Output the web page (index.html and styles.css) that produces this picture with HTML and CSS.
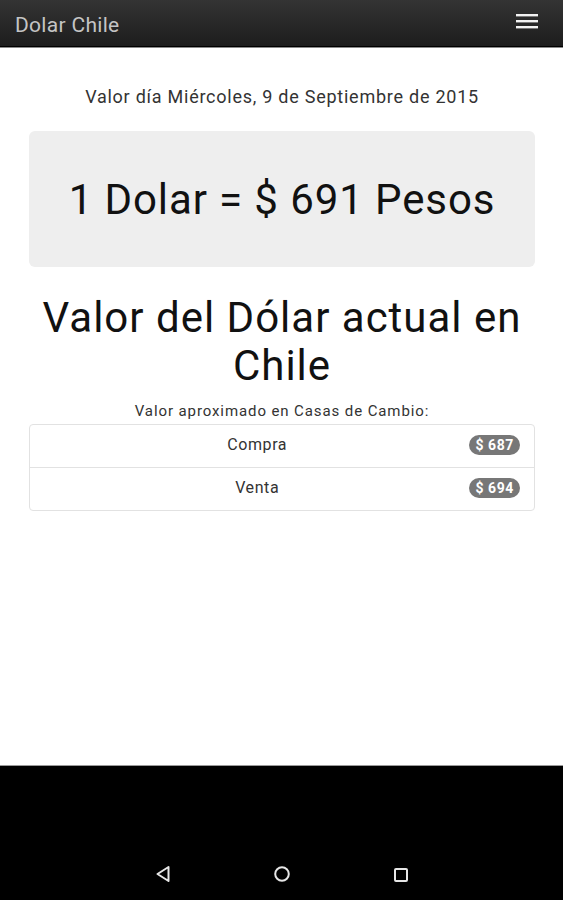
FILE: index.html
```html
<!DOCTYPE html>
<html lang="es">
<head>
<meta charset="utf-8">
<title>Dolar Chile</title>
<link rel="stylesheet" href="styles.css">
</head>
<body>
<div class="screen">
  <header class="topbar">
    <span class="title">Dolar Chile</span>
    <svg class="menu" width="22" height="16" viewBox="0 0 22 16">
      <rect x="0" y="1" width="22" height="2.4" fill="#f2f2f2"/>
      <rect x="0" y="7" width="22" height="2.4" fill="#f2f2f2"/>
      <rect x="0" y="13" width="22" height="2.4" fill="#f2f2f2"/>
    </svg>
  </header>
  <main class="content">
    <p class="date">Valor día Miércoles, 9 de Septiembre de 2015</p>
    <div class="jumbo">1 Dolar = $ 691 Pesos</div>
    <h1 class="heading">Valor del Dólar actual en Chile</h1>
    <p class="sub">Valor aproximado en Casas de Cambio:</p>
    <ul class="list">
      <li class="item"><span class="label">Compra</span><span class="badge">$ 687</span></li>
      <li class="item"><span class="label">Venta</span><span class="badge">$ 694</span></li>
    </ul>
  </main>
  <nav class="navbar">
    <svg width="16" height="18" viewBox="0 0 16 18"><path d="M13.5 2 L2.5 9 L13.5 16 Z" fill="none" stroke="#e6e6e6" stroke-width="2" stroke-linejoin="round"/></svg>
    <svg width="18" height="18" viewBox="0 0 18 18"><circle cx="9" cy="9" r="6.8" fill="none" stroke="#e6e6e6" stroke-width="2"/></svg>
    <svg width="16" height="16" viewBox="0 0 16 16"><rect x="2" y="2" width="12" height="12" rx="1" fill="none" stroke="#e6e6e6" stroke-width="2"/></svg>
  </nav>
</div>
</body>
</html>
```

FILE: styles.css
```css
html, body {
  margin: 0;
  padding: 0;
}
body {
  font-family: Roboto, "Noto Sans", sans-serif;
  background: #fff;
}
.screen {
  width: 563px;
  height: 900px;
  display: flex;
  flex-direction: column;
  overflow: hidden;
}
.topbar {
  height: 46px;
  flex: none;
  background: linear-gradient(#343434, #1d1d1d);
  border-bottom: 1px solid #000;
  box-shadow: 0 1px 0 #8a8a8a;
  display: flex;
  align-items: center;
  justify-content: space-between;
  padding: 0 25px 0 15px;
}
.title {
  color: #c4c4c4;
  font-size: 21px;
  letter-spacing: 0.3px;
  padding-top: 4px;
}
.menu {
  margin-top: -4px;
}
.content {
  flex: 1;
  padding: 0 28px 0 29px;
  display: flex;
  flex-direction: column;
  text-align: center;
}
.date {
  margin: 38px 0 0;
  font-size: 18px;
  letter-spacing: 0.75px;
  color: #333;
  line-height: 24px;
}
.jumbo {
  margin-top: 22px;
  height: 136px;
  background: #eeeeee;
  border-radius: 6px;
  display: flex;
  align-items: center;
  justify-content: center;
  font-size: 42px;
  color: #111;
  letter-spacing: 0.9px;
}
.heading {
  margin: 27px 0 0;
  font-size: 42px;
  font-weight: 400;
  line-height: 48px;
  letter-spacing: 1px;
  color: #111;
}
.sub {
  margin: 11px 0 0;
  font-size: 15px;
  letter-spacing: 0.9px;
  line-height: 20px;
  color: #333;
}
.list {
  list-style: none;
  margin: 3px 0 0;
  padding: 0;
  border: 1px solid #e2e2e2;
  border-radius: 4px;
}
.item {
  height: 42px;
  display: flex;
  align-items: center;
  padding: 0 14px 3px 15px;
  box-sizing: border-box;
  font-size: 16px;
  letter-spacing: 0.6px;
  color: #333;
}
.item + .item {
  height: 43px;
  border-top: 1px solid #e2e2e2;
}
.label {
  flex: 1;
  text-align: center;
}
.badge {
  flex: none;
  height: 20px;
  line-height: 20px;
  padding: 0 6px;
  border-radius: 10px;
  background: #777;
  color: #fff;
  font-weight: 700;
  font-size: 14px;
  letter-spacing: 0.6px;
}
.navbar {
  height: 135px;
  flex: none;
  background: #000;
  border-top: 1px solid #9a9a9a;
  display: flex;
  align-items: flex-end;
  justify-content: center;
  gap: 102px;
  padding-bottom: 17px;
  box-sizing: border-box;
}
```
